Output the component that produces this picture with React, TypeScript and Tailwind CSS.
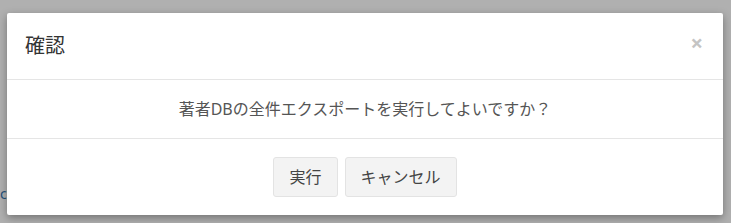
import React from 'react';

const font = { fontFamily: '"Noto Sans", "Noto Sans CJK JP", sans-serif' };

const App: React.FC = () => {
  return (
    <div className="relative w-[731px] h-[223px] overflow-hidden bg-[#b0b0b0] pt-[13px] pl-[7px]" style={font}>
      {/* link text behind the backdrop */}
      <span className="absolute left-[0px] top-[183px] text-[14px] text-[#23527c]">c</span>

      {/* Modal */}
      <div className="relative w-[716px] bg-white rounded-[2px] shadow-[0_3px_9px_rgba(0,0,0,0.35)]">
        <div className="flex items-center justify-between h-[67px] px-[18px] border-b border-[#e5e5e5]">
          <h4 className="text-[20px] text-[#333] leading-none">確認</h4>
          <button className="text-[22px] font-bold leading-none text-[#c4c4c4] mr-[2px] mt-[-8px]">×</button>
        </div>
        <div className="flex items-center justify-center h-[59px] text-[16px] text-[#555] border-b border-[#e5e5e5]">
          著者DBの全件エクスポートを実行してよいですか？
        </div>
        <div className="flex items-center justify-center gap-[7px] h-[76px]">
          <button className="h-[40px] px-[15px] text-[16px] text-[#444] bg-[#f3f3f3] border border-[#e3e3e3] rounded-[3px]">
            実行
          </button>
          <button className="h-[40px] px-[15px] text-[16px] text-[#444] bg-[#f3f3f3] border border-[#e3e3e3] rounded-[3px]">
            キャンセル
          </button>
        </div>
      </div>
    </div>
  );
};

export default App;
